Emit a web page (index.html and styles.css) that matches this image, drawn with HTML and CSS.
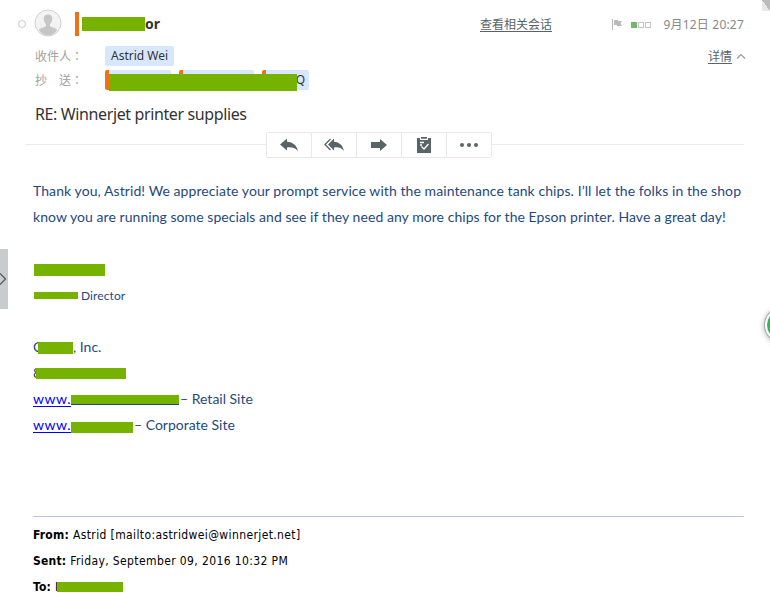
FILE: index.html
```html
<!DOCTYPE html>
<html lang="zh-CN">

<head>
  <meta charset="UTF-8" />
  <meta name="viewport" content="width=device-width, initial-scale=1.0" />
  <title>RE: Winnerjet printer supplies</title>
  <link rel="stylesheet" href="styles.css">
</head>

<body>
  <div class="mail">
    <header class="header">
      <div class="sender-row">
        <span class="unread"></span>
        <svg class="avatar" viewBox="0 0 28 28">
          <circle cx="14" cy="14" r="13" fill="#f3f3f3" stroke="#d2d2d2" />
          <path d="M14 5.500c-3 0-4.500 2-4.300 4.600.2 2.600 1.300 4 2.300 5v1.800c-.5 1.300-5.800 1.600-7.200 4A12 12 0 0 0 14 26.500a12 12 0 0 0 9.200-5.600c-1.400-2.400-6.700-2.700-7.200-4v-1.800c1-1 2.100-2.400 2.300-5 .2-2.600-1.300-4.600-4.300-4.600z" fill="#c6c6c6" />
        </svg>
        <span class="sender"><i class="redact name-block"></i>or</span>
        <a class="link related">查看相关会话</a>
        <svg class="flag" viewBox="0 0 10 11">
          <path d="M.5 0v11" stroke="#b9b9b9" />
          <path d="M2 1h4v1h4l-1.500 2.500L10 7H5V6H2z" fill="#b9b9b9" />
        </svg>
        <span class="level"><i class="on"></i><i></i><i></i></span>
        <span class="date">9月12日 20:27</span>
      </div>
      <div class="field">
        <span class="field-label">收件人<span lang="zh-TW" class="colon">：</span></span>
        <span class="chip">Astrid Wei</span>
        <a class="link detail">详情</a>
        <svg class="caret" viewBox="0 0 10 6"><path d="M1 5.500l4-4 4 4" fill="none" stroke="#999" stroke-width="1.200" /></svg>
      </div>
      <div class="field">
        <span class="field-label">抄&#x3000;送<span lang="zh-TW" class="colon">：</span></span>
        <div class="cc">
          <span class="chip flagged cc-first"></span>
          <span class="chip flagged cc-second"></span>
          <span class="chip flagged cc-third">Q</span>
          <i class="redact cc-block"></i>
        </div>
      </div>
      <h1 class="subject"><span>RE: Winnerjet printer supplies</span></h1>
    </header>

    <div class="toolbar">
      <div class="buttons">
        <button class="action" title="回复">
          <svg viewBox="0 0 20 16"><path d="M1 7.500L8 1.500v3.200c6 .2 10 4 11 9.300-3-3.200-6.500-4-11-3.500v3z" fill="#596469" /></svg>
        </button>
        <button class="action" title="回复全部">
          <svg viewBox="0 0 20 16"><path d="M4 7.500l6-6v3.200c5.500.2 9 4 10 9.300-2.700-3.200-5.500-4-10-3.500v3z" fill="#596469" /><path d="M6.500 2l-5.500 5.500 5.500 5.500" fill="none" stroke="#596469" stroke-width="1.300" /></svg>
        </button>
        <button class="action" title="转发">
          <svg viewBox="0 0 20 16"><path d="M2 5h9V2l7 6-7 6v-3H2z" fill="#596469" /></svg>
        </button>
        <button class="action" title="任务">
          <svg viewBox="0 0 20 16"><path d="M3 1h3v2h8V1h3v15H3zM7 0h6v1.800H7z" fill="#596469" /><path d="M6 5.500h4M6 8h2M7.500 9.500l2.500 2.500 4.500-5" fill="none" stroke="#fff" stroke-width="1.300" /></svg>
        </button>
        <button class="action" title="更多">
          <svg viewBox="0 0 20 16"><g fill="#596469"><circle cx="3" cy="8" r="2" /><circle cx="10" cy="8" r="2" /><circle cx="17" cy="8" r="2" /></g></svg>
        </button>
      </div>
    </div>

    <div class="content">
      <p class="line first">Thank you, Astrid! We appreciate your prompt service with the maintenance tank chips. I’ll let the folks in the shop</p>
      <p class="line second">know you are running some specials and see if they need any more chips for the Epson printer. Have a great day!</p>
      <p class="line"></p>
      <p class="line"><i class="redact sign-name"></i></p>
      <p class="line small"><i class="redact sign-title"></i><span>Director</span></p>
      <p class="line"></p>
      <p class="line"><span class="initial">C</span><i class="redact company"></i><span>, Inc.</span></p>
      <p class="line"><span class="digit">8</span><i class="redact phone"></i></p>
      <p class="line"><a class="site">www.<i class="redact retail"></i></a><span class="site-name">– Retail Site</span></p>
      <p class="line"><a class="site">www.<i class="redact corporate"></i></a><span class="site-name">– Corporate Site</span></p>
    </div>

    <div class="quoted">
      <p class="quoted-line"><b>From:</b><span>Astrid [mailto:astridwei@winnerjet.net]</span></p>
      <p class="quoted-line"><b>Sent:</b><span>Friday, September 09, 2016 10:32 PM</span></p>
      <p class="quoted-line"><b>To:</b><span class="to">I</span><i class="redact to-block"></i></p>
    </div>
  </div>

  <div class="drawer">
    <svg viewBox="0 0 8 14"><path d="M0 1.500L5.500 7 0 12.500" fill="none" stroke="#555" stroke-width="1.200" /></svg>
  </div>
  <div class="floating"></div>
  <div class="corner"></div>
</body>

</html>
```
FILE: styles.css
```css
:root {
  --redact: #76b300;
  --chip: #d7e7fd;
  --mark: #ee7112;
}

* {
  box-sizing: border-box;
}

body {
  position: relative;
  margin: 0;
  height: 597px;
  overflow: hidden;
  background: #fff;
  font-family: "Noto Sans", "Noto Sans CJK SC", sans-serif;
  font-size: 12px;
  color: #333;
}

p, h1 {
  margin: 0;
}

.mail {
  padding: 8px 26px 0 33px;
}

.redact {
  display: block;
  flex: none;
  background: var(--redact);
}

.link {
  color: #596469;
  text-decoration: underline;
  text-underline-offset: 2px;
}

/* header */
.sender-row {
  display: flex;
  align-items: center;
  height: 32px;
  margin-left: -15px;
}

.unread {
  width: 8px;
  height: 8px;
  border: 1px solid #ccc;
  border-radius: 50%;
}

.avatar {
  width: 28px;
  height: 28px;
  margin: -2px 13px 0 8px;
}

.sender {
  display: flex;
  align-items: center;
  width: 405px;
  height: 24px;
  padding-left: 3px;
  border-left: 4px solid var(--mark);
  font-size: 14px;
  font-weight: bold;
  line-height: 24px;
  color: #333;
}

.name-block {
  width: 63px;
  height: 14px;
}

.flag {
  width: 10px;
  height: 11px;
  margin-left: 60px;
}

.level {
  display: flex;
  gap: 1px;
  margin: 2px 10px 0 9px;
}

.level i {
  width: 6px;
  height: 6px;
  border: 1px solid #c4c4c4;
}

.level .on {
  background: #73b76b;
  border-color: #73b76b;
}

.date {
  flex: 1;
  color: #888;
  letter-spacing: 0.2px;
  text-align: right;
  white-space: nowrap;
}

.field {
  display: flex;
  align-items: center;
  height: 24px;
  padding-left: 2px;
}

.sender-row + .field {
  margin-top: 4px;
}

.field-label {
  width: 70px;
  color: #a0a0a0;
}

.colon {
  font-family: "Noto Sans CJK TC", sans-serif;
  line-height: 1;
}

.chip {
  height: 20px;
  padding: 0 6px;
  background: var(--chip);
  border-radius: 2px;
  line-height: 20px;
}

.detail {
  margin-left: auto;
}

.caret {
  width: 10px;
  height: 6px;
  margin: 0 -2px 0 4px;
}

.cc {
  display: flex;
  gap: 8px;
  position: relative;
}

.flagged {
  border-left: 4px solid var(--mark);
}

.cc-first {
  width: 66px;
}

.cc-second {
  width: 75px;
}

.cc-third {
  width: 47px;
  padding-right: 4px;
  text-align: right;
}

.cc-block {
  position: absolute;
  left: 4px;
  top: 4px;
  width: 188px;
  height: 17px;
}

.subject {
  height: 44px;
  padding-left: 2px;
  font-size: 16px;
  font-weight: normal;
  line-height: 44px;
  letter-spacing: -0.38px;
  color: #333;
  white-space: nowrap;
}

/* toolbar */
.toolbar {
  display: flex;
  align-items: center;
  height: 26px;
  margin: -4px 0 0 -8px;
}

.toolbar::before,
.toolbar::after {
  content: "";
  width: 241px;
  height: 1px;
  margin-top: -1px;
  background: #ebebeb;
}

.toolbar::after {
  flex: 1;
}

.buttons {
  display: flex;
  width: 226px;
  height: 26px;
  border: 1px solid #e8e8e8;
  border-radius: 2px;
}

.action {
  display: flex;
  flex: 1;
  align-items: center;
  justify-content: center;
  padding: 0;
  border: 0;
  background: #fff;
}

.action + .action {
  border-left: 1px solid #e8e8e8;
}

.action svg {
  width: 20px;
  height: 16px;
}

/* message */
.content {
  padding-top: 20px;
  font-family: Lato, sans-serif;
  font-size: 14px;
  color: #1f497d;
}

.line {
  display: flex;
  align-items: center;
  height: 26px;
  line-height: 26px;
  white-space: nowrap;
}

.first {
  letter-spacing: 0.078px;
}

.second {
  letter-spacing: 0.055px;
}

.small {
  padding-top: 1px;
  font-size: 12px;
  letter-spacing: 0.1px;
}

.sign-name {
  width: 71px;
  height: 12px;
  margin: 2px 0 0 1px;
}

.sign-title {
  width: 44px;
  height: 7px;
  margin: 0 3px 0 1px;
}

/* the block lies over the rest of the letter */
.initial {
  width: 5px;
}

.digit {
  width: 3px;
}

.company {
  width: 35px;
  height: 12px;
  margin-top: 2px;
}

.phone {
  width: 90px;
  height: 11px;
}

.site {
  display: flex;
  align-items: center;
  color: #00f;
  letter-spacing: 0.5px;
  text-decoration: underline;
  text-underline-offset: 2px;
}

.retail {
  width: 108px;
  height: 10px;
  margin-top: 2px;
  border-bottom: 1px solid #1f497d;
}

.corporate {
  width: 62px;
  height: 11px;
  margin-top: 4px;
}

.site-name {
  margin-left: 1px;
}

/* quoted message */
.quoted {
  margin-top: 78px;
  padding-top: 5px;
  border-top: 1px solid #b5c4df;
  font-family: "DejaVu Sans Condensed", "DejaVu Sans", sans-serif;
  font-size: 12px;
  letter-spacing: 0.385px;
  color: #000;
}

.quoted-line {
  display: flex;
  align-items: center;
  height: 26px;
  line-height: 26px;
  white-space: nowrap;
}

.quoted-line b {
  margin-right: 4px;
  letter-spacing: 0.2px;
}

.to {
  width: 2px;
}

.to-block {
  width: 66px;
  height: 10px;
}

/* overlays on the window edges */
.drawer {
  display: flex;
  position: absolute;
  left: 0;
  top: 249px;
  align-items: center;
  width: 8px;
  height: 60px;
  background: #c8cccd;
}

.drawer svg {
  width: 8px;
  height: 14px;
}

.floating {
  position: absolute;
  left: 765px;
  top: 308px;
  width: 34px;
  height: 34px;
  border: 2px solid #fff;
  border-radius: 50%;
  background: #35b558;
  box-shadow: 0 0 0 1px #aaa, 0 1px 6px #999;
}

.corner {
  position: absolute;
  right: 0;
  top: 0;
  width: 8px;
  height: 11px;
  background: linear-gradient(to top right, #e8e8e8 50%, #bbb 50%);
}
```
